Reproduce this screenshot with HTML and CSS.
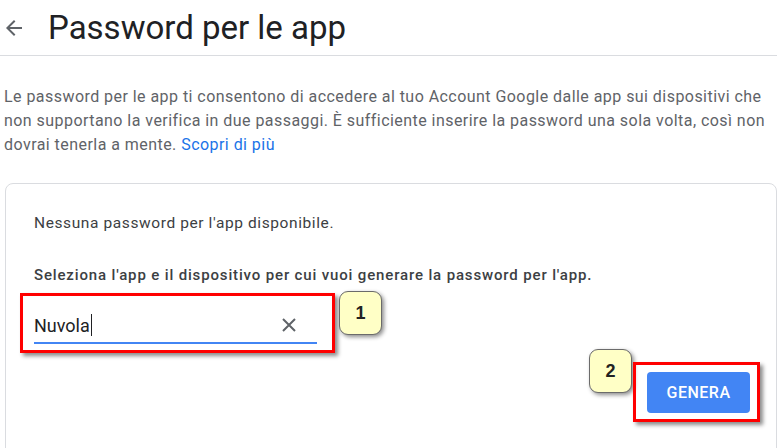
FILE: index.html
```html
<!DOCTYPE html>
<html lang="it">
<head>
  <meta charset="UTF-8" />
  <title>Password per le app</title>
  <link rel="stylesheet" href="styles.css">
</head>
<body>

  <header class="topbar">
    <a class="back" href="#">
      <svg width="18" height="16" viewBox="4 4 16 16"><path d="M20 11H7.83l5.59-5.59L12 4l-8 8 8 8 1.41-1.41L7.83 13H20v-2z" fill="#5f6368"/></svg>
    </a>
    <h1>Password per le app</h1>
  </header>

  <main class="page">
    <p class="intro">Le password per le app ti consentono di accedere al tuo Account Google dalle app sui dispositivi che non supportano la verifica in due passaggi. È sufficiente inserire la password una sola volta, così non dovrai tenerla a mente. <a href="#">Scopri di più</a></p>

    <section class="card">
      <p class="empty">Nessuna password per l'app disponibile.</p>
      <p class="label">Seleziona l'app e il dispositivo per cui vuoi generare la password per l'app.</p>

      <!-- step 1 -->
      <div class="step step-one">
        <div class="mark mark-field">
          <div class="field">
            <span class="value">Nuvola<span class="caret"></span></span>
            <button class="clear">
              <svg width="14" height="14" viewBox="0 0 14 14"><path d="M1 1L13 13M13 1L1 13" stroke="#5f6368" stroke-width="2"/></svg>
            </button>
          </div>
        </div>
        <span class="callout">1</span>
      </div>

      <!-- step 2 -->
      <div class="actions">
        <span class="callout">2</span>
        <div class="mark mark-button">
          <button class="generate">GENERA</button>
        </div>
      </div>
    </section>
  </main>

</body>
</html>
```

FILE: styles.css
```css
body {
  margin: 0;
  font-family: Roboto, Arial, sans-serif;
  background-color: white;
  color: #202124;
  overflow: hidden;
}

.topbar {
  height: 55px;
  display: flex;
  align-items: center;
  border-bottom: 1px solid #dadce0;
}

.topbar .back {
  display: flex;
  margin-left: 5px;
}

.topbar h1 {
  margin: 0 0 0 25px;
  font-size: 33px;
  font-weight: 400;
  color: #202124;
}

.page {
  padding-left: 4px;
}

.intro {
  margin: 29px 0 0 0;
  font-size: 16px;
  line-height: 24px;
  letter-spacing: 0.45px;
  color: #5f6368;
}

.intro a {
  color: #1a73e8;
  text-decoration: none;
}

.card {
  margin: 26px 0 0 1px;
  border: 1px solid #dadce0;
  border-radius: 8px;
  padding: 29px 16px 40px 28px;
  height: 300px;
}

.empty {
  margin: 0;
  font-size: 15.5px;
  line-height: 20px;
  letter-spacing: 0.6px;
  color: #3c4043;
}

.label {
  margin: 32px 0 0 0;
  font-size: 15px;
  line-height: 20px;
  font-weight: 500;
  letter-spacing: 0.85px;
  color: #3c4043;
}

.step-one {
  display: flex;
  align-items: flex-start;
  gap: 4px;
  margin: 8px 0 0 -14px;
}

.mark {
  border: 3px solid #f00;
  box-shadow: 3px 3px 4px rgba(0, 0, 0, 0.45);
}

.mark-field {
  width: 283px;
  height: 54px;
  padding: 0 15px 0 11px;
  display: flex;
  align-items: flex-end;
}

.field {
  flex: 1;
  display: flex;
  align-items: center;
  justify-content: space-between;
  border-bottom: 2px solid #4285f4;
  height: 40px;
  margin-bottom: 6px;
}

.value {
  margin-top: 6px;
  font-size: 18px;
  color: #202124;
  display: flex;
  align-items: center;
}

.caret {
  width: 1px;
  height: 22px;
  background-color: #202124;
  margin-left: 1px;
}

.clear {
  margin-top: 6px;
  border: none;
  background: none;
  padding: 0;
  margin-right: 21px;
  display: flex;
}

.callout {
  width: 41px;
  height: 42px;
  margin-top: -2px;
  display: flex;
  align-items: center;
  justify-content: center;
  background-color: #ffffc6;
  border: 1px solid #6b6b6b;
  border-radius: 9px;
  box-shadow: 2px 2px 4px rgba(0, 0, 0, 0.45);
  font-family: "Liberation Sans", Arial, sans-serif;
  font-weight: bold;
  font-size: 18px;
  color: #222;
}

.actions {
  display: flex;
  justify-content: flex-end;
  align-items: flex-start;
  gap: 1px;
  margin-top: -4px;
}

.actions .callout {
  margin-top: 0;
}

.mark-button {
  margin-top: 13px;
  padding: 7px 7px 6px 11px;
}

.generate {
  width: 103px;
  height: 41px;
  border: none;
  border-radius: 4px;
  background-color: #4285f4;
  color: white;
  font-family: Roboto, Arial, sans-serif;
  font-size: 16px;
  font-weight: 500;
  letter-spacing: 0.5px;
  cursor: pointer;
}
```
